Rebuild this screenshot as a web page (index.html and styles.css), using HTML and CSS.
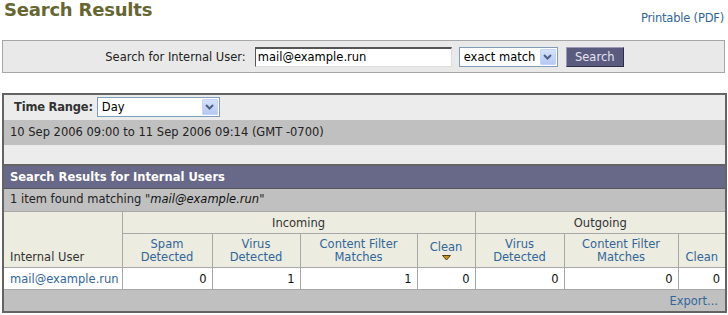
FILE: index.html
```html
<!DOCTYPE html>
<html>
<head>
<meta charset="utf-8">
<link rel="stylesheet" href="styles.css">
</head>
<body>
<div class="page">
  <div class="top">
    <h1 class="title">Search Results</h1>
    <a class="link printable">Printable (PDF)</a>
  </div>
  <div class="searchbar">
    <span class="label">Search for Internal User:</span>
    <span class="textbox">mail@example.run</span>
    <span class="select match">exact match<span class="arrowbtn"><svg width="9" height="6" viewBox="0 0 9 6"><path d="M1 1 L4.5 4.5 L8 1" fill="none" stroke="#4d6185" stroke-width="2"/></svg></span></span>
    <span class="button">Search</span>
  </div>
  <div class="panel">
    <div class="range-row">
      <span class="range-label">Time Range:</span>
      <span class="select range">Day<span class="arrowbtn"><svg width="9" height="6" viewBox="0 0 9 6"><path d="M1 1 L4.5 4.5 L8 1" fill="none" stroke="#4d6185" stroke-width="2"/></svg></span></span>
    </div>
    <div class="date-row">10 Sep 2006 09:00 to 11 Sep 2006 09:14 (GMT -0700)</div>
    <div class="spacer"></div>
    <div class="section-head">Search Results for Internal Users</div>
    <div class="found">1 item found matching "<i>mail@example.run</i>"</div>
    <table class="results">
      <colgroup>
        <col class="c1"><col class="c2"><col class="c3"><col class="c4"><col class="c5"><col class="c6"><col class="c7"><col class="c8">
      </colgroup>
      <thead>
        <tr class="group">
          <th rowspan="2" class="user-head">Internal User</th>
          <th colspan="4">Incoming</th>
          <th colspan="3" class="last">Outgoing</th>
        </tr>
        <tr class="sub">
          <th class="lnk">Spam<br>Detected</th>
          <th class="lnk">Virus<br>Detected</th>
          <th class="lnk">Content Filter<br>Matches</th>
          <th class="lnk sorted">Clean<span class="sort"><svg width="9" height="6" viewBox="0 0 9 6"><path d="M0.5 0.5 H8.5 L4.5 5 Z" fill="#c8921e" stroke="#5a3f10" stroke-width="1"/></svg></span></th>
          <th class="lnk">Virus<br>Detected</th>
          <th class="lnk">Content Filter<br>Matches</th>
          <th class="lnk last">Clean</th>
        </tr>
      </thead>
      <tbody>
        <tr class="data">
          <td class="user"><a class="link">mail@example.run</a></td>
          <td>0</td>
          <td>1</td>
          <td>1</td>
          <td>0</td>
          <td>0</td>
          <td>0</td>
          <td class="last">0</td>
        </tr>
      </tbody>
    </table>
    <div class="export"><a class="link">Export...</a></div>
  </div>
</div>
</body>
</html>
```
FILE: styles.css
```css
* { box-sizing: border-box; }
html, body { margin: 0; padding: 0; background: #fff; }
body {
  font-family: "DejaVu Sans", Verdana, sans-serif;
  font-size: 11.5px;
  color: #222;
}
.page { padding: 0 2px 0 2px; width: 728px; }
.link { color: #336699; text-decoration: none; }

.top {
  display: flex;
  justify-content: space-between;
  align-items: flex-start;
  height: 40px;
}
.title {
  margin: 0;
  padding: 0 0 0 2px;
  font-size: 18px;
  line-height: 20px;
  font-weight: bold;
  color: #666633;
  letter-spacing: -0.2px;
}
.printable { margin-top: 11px; margin-right: 2px; letter-spacing: -0.2px; }

.searchbar {
  width: 723px;
  height: 33px;
  background: #e9e9e9;
  border: 1px solid #a6a6a6;
  display: flex;
  align-items: center;
  justify-content: center;
  padding-left: 2px;
}
.label { margin-right: 9px; color: #222; }
.textbox {
  width: 197px;
  height: 20px;
  background: #fff;
  border-top: 2px solid #555;
  border-left: 1px solid #555;
  border-right: 1px solid #ddd;
  border-bottom: 1px solid #ddd;
  padding: 0 2px;
  line-height: 17px;
  color: #000;
  margin-right: 7px;
}
.select {
  position: relative;
  height: 20px;
  background: #fff;
  border: 1px solid #7f9db9;
  padding: 0 0 0 4px;
  line-height: 18px;
  color: #000;
  display: inline-block;
}
.select.match { width: 99px; margin-right: 8px; }
.select.range { width: 123px; }
.arrowbtn {
  position: absolute;
  right: 1px;
  top: 1px;
  width: 16px;
  height: 16px;
  background: linear-gradient(#d6e2fb, #b7c9f2);
  border: 1px solid #c3d3fd;
  border-radius: 1px;
  display: flex;
  align-items: center;
  justify-content: center;
}
.button {
  width: 58px;
  height: 20px;
  background: #5b5b80;
  border-top: 1px solid #9a9ab8;
  border-left: 1px solid #9a9ab8;
  border-right: 1px solid #2e2e48;
  border-bottom: 1px solid #2e2e48;
  color: #e4e4f0;
  text-align: center;
  line-height: 18px;
}

.panel {
  margin-top: 20px;
  width: 725px;
  height: 220px;
  border: 2px solid #646464;
  background: #c0c0c0;
  overflow: hidden;
}
.range-row {
  height: 25px;
  background: #ececec;
  display: flex;
  align-items: flex-start;
  padding: 2px 0 0 10px;
}
.range-label { font-weight: bold; color: #333; margin-right: 4px; line-height: 20px; letter-spacing: -0.2px; }
.date-row {
  height: 25px;
  background: #c0c0c0;
  padding-left: 6px;
  line-height: 24px;
  color: #222;
}
.spacer { height: 21px; background: #ececec; border-bottom: 2px solid #646464; }
.section-head {
  height: 23px;
  background: #686888;
  color: #fff;
  font-weight: bold;
  padding-left: 6px;
  line-height: 22px;
  border-bottom: 1px solid #555;
}
.found {
  height: 22px;
  line-height: 21px;
  padding-left: 6px;
  background: #c0c0c0;
  color: #222;
}
.found i { color: #111; }

.results {
  width: 721px;
  border-collapse: collapse;
  table-layout: fixed;
  border-top: 1px solid #a8a8a8;
}
.c1 { width: 118px; } .c2 { width: 90px; } .c3 { width: 88px; } .c4 { width: 117px; }
.c5 { width: 58px; } .c6 { width: 89px; } .c7 { width: 114px; } .c8 { width: 47px; }
.results th, .results td {
  border: 1px solid #a8a8a8;
  padding: 0 5px;
  font-weight: normal;
}
.results th:first-child, .results td:first-child { border-left: none; }
.results .last { border-right: none; }
.results th { background: #ecece0; color: #333; text-align: center; }
.group th { height: 22px; line-height: 20px; }
.sub th { height: 34px; line-height: 13px; vertical-align: bottom; padding-bottom: 3px; }
.results th.user-head { text-align: left; vertical-align: bottom; padding: 0 0 3px 6px; line-height: 13px; }
.results th.lnk { color: #336699; }
.results th.sorted { padding-bottom: 4px; vertical-align: middle; padding-top: 4px; }
.sort { display: block; height: 6px; line-height: 0; margin-top: 1px; }
.data td { background: #fff; height: 22px; text-align: right; color: #111; line-height: 20px; }
.results td.user { text-align: left; padding-left: 6px; }

.export {
  height: 21px;
  text-align: right;
  padding-right: 7px;
  line-height: 22px;
  background: #c0c0c0;
}
```
